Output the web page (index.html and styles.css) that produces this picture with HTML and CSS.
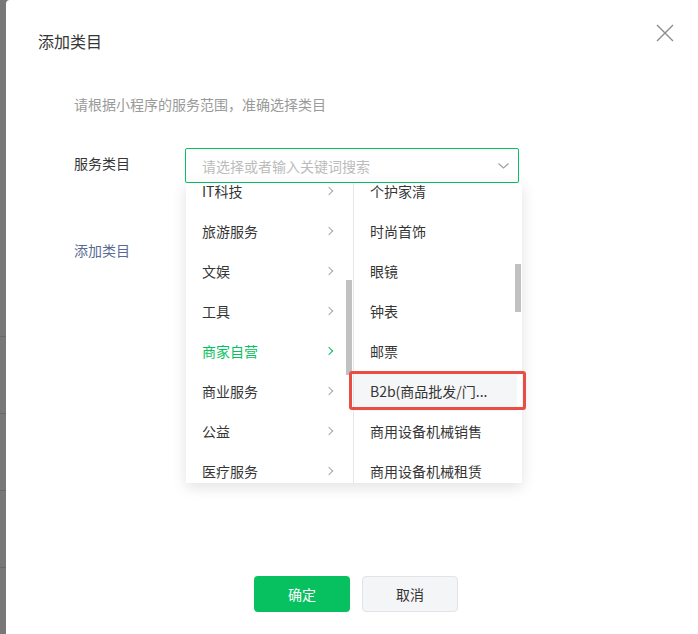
FILE: index.html
```html
<!DOCTYPE html>
<html lang="zh">
<head>
<meta charset="utf-8">
<link rel="stylesheet" href="styles.css">
</head>
<body>
<div class="modal">
  <div class="header">
    <h2 class="title">添加类目</h2>
    <button class="close" aria-label="关闭">
      <svg width="18" height="18" viewBox="0 0 18 18"><path d="M1 1L17 17M17 1L1 17" stroke="#8c8c8c" stroke-width="1.4" fill="none"/></svg>
    </button>
  </div>
  <div class="body">
    <p class="tip">请根据小程序的服务范围，准确选择类目</p>
    <div class="form-row">
      <label class="label">服务类目</label>
      <div class="select">
        <div class="input">
          <span class="placeholder">请选择或者输入关键词搜索</span>
          <svg class="arrow" width="11" height="6" viewBox="0 0 11 6"><path d="M0.5 0.5L5.5 5L10.5 0.5" stroke="#a0a0a0" stroke-width="1.1" fill="none"/></svg>
        </div>
        <div class="dropdown">
          <div class="col col-left">
            <ul class="list">
              <li class="item">IT科技<span class="chev"></span></li>
              <li class="item">旅游服务<span class="chev"></span></li>
              <li class="item">文娱<span class="chev"></span></li>
              <li class="item">工具<span class="chev"></span></li>
              <li class="item active">商家自营<span class="chev"></span></li>
              <li class="item">商业服务<span class="chev"></span></li>
              <li class="item">公益<span class="chev"></span></li>
              <li class="item">医疗服务<span class="chev"></span></li>
            </ul>
            <div class="thumb thumb-left"></div>
          </div>
          <div class="col col-right">
            <ul class="list">
              <li class="item">个护家清</li>
              <li class="item">时尚首饰</li>
              <li class="item">眼镜</li>
              <li class="item">钟表</li>
              <li class="item">邮票</li>
              <li class="item hover">B2b(商品批发/门...</li>
              <li class="item">商用设备机械销售</li>
              <li class="item">商用设备机械租赁</li>
            </ul>
            <div class="thumb thumb-right"></div>
          </div>
          <div class="mark"></div>
        </div>
      </div>
    </div>
    <a class="link" href="#">添加类目</a>
  </div>
  <div class="footer">
    <button class="btn btn-primary">确定</button>
    <button class="btn btn-default">取消</button>
  </div>
</div>
</body>
</html>
```

FILE: styles.css
```css
* { box-sizing: border-box; }
html, body { margin: 0; padding: 0; }
body {
  width: 698px;
  height: 634px;
  overflow: hidden;
  font-family: "Noto Sans CJK SC", "Noto Sans", "Liberation Sans", sans-serif;
  background-color: #787878;
  background-image:
    linear-gradient(#6a6a6a, #6a6a6a),
    linear-gradient(#6a6a6a, #6a6a6a),
    linear-gradient(#6a6a6a, #6a6a6a),
    linear-gradient(#6a6a6a, #6a6a6a);
  background-size: 6px 1px;
  background-repeat: no-repeat;
  background-position: 0 336px, 0 413px, 0 490px, 0 567px;
}
.modal {
  margin-left: 6px;
  width: 692px;
  height: 634px;
  background: #fff;
  border-top-left-radius: 4px;
  display: flex;
  flex-direction: column;
  position: relative;
}
.header {
  padding: 29px 0 0 32px;
  position: relative;
}
.title {
  margin: 0;
  font-size: 16px;
  font-weight: normal;
  line-height: 24px;
  color: #353535;
}
.close {
  position: absolute;
  top: 24px;
  right: 24px;
  width: 18px;
  height: 18px;
  padding: 0;
  border: 0;
  background: none;
  display: block;
}
.close svg { display: block; }
.body {
  padding-left: 68px;
}
.tip {
  margin: 41px 0 0;
  font-size: 14px;
  line-height: 20px;
  color: #9a9a9a;
}
.form-row {
  margin-top: 34px;
  display: flex;
  align-items: flex-start;
}
.label {
  width: 111px;
  font-size: 14px;
  line-height: 31px;
  color: #353535;
}
.select {
  position: relative;
  width: 334px;
}
.input {
  height: 35px;
  border: 1px solid #07c160;
  border-radius: 2px;
  display: flex;
  align-items: center;
  padding: 0 9px 0 16px;
}
.placeholder {
  flex: 1;
  font-size: 14px;
  color: #bcbcbc;
}
.arrow { display: block; margin-top: 1px; }
.dropdown {
  position: absolute;
  top: 35px;
  left: 1px;
  width: 336px;
  height: 300px;
  background: #fff;
  display: flex;
  box-shadow: 0 4px 14px rgba(0, 0, 0, 0.12);
  z-index: 2;
}
.col {
  position: relative;
  overflow: hidden;
  height: 100%;
}
.col-left {
  width: 168px;
  border-right: 1px solid #e6e6e6;
}
.col-right {
  width: 168px;
}
.list {
  list-style: none;
  margin: -12px 0 0;
  padding: 0;
}
.item {
  height: 40px;
  display: flex;
  align-items: center;
  font-size: 14px;
  color: #353535;
  white-space: nowrap;
}
.col-left .item { padding: 0 21px 0 16px; justify-content: space-between; }
.col-right .item { padding: 0 16px; margin-right: 5px; }
.item.active { color: #07c160; }
.item.hover { background: #f5f6f7; }
.chev {
  width: 6px;
  height: 6px;
  border-top: 1px solid #a8a8a8;
  border-right: 1px solid #a8a8a8;
  transform: rotate(45deg);
}
.item.active .chev { border-color: #07c160; }
.thumb {
  position: absolute;
  width: 6px;
  background: #c1c1c1;
}
.thumb-left { right: 1px; top: 97px; height: 95px; }
.thumb-right { right: 1px; top: 81px; height: 48px; }
.mark {
  position: absolute;
  left: 163px;
  top: 188px;
  width: 177px;
  height: 39px;
  border: 3px solid #ea4d43;
  border-radius: 3px;
  z-index: 3;
}
.link {
  display: block;
  margin-top: 57px;
  width: max-content;
  font-size: 14px;
  line-height: 20px;
  color: #576b95;
  text-decoration: none;
}
.footer {
  margin-top: auto;
  padding: 0 0 22px 8px;
  display: flex;
  justify-content: center;
  gap: 12px;
}
.btn {
  width: 96px;
  height: 36px;
  border-radius: 4px;
  font-family: inherit;
  font-size: 14px;
  padding: 0;
}
.btn-primary {
  background: #07c160;
  border: 0;
  color: #fff;
}
.btn-default {
  background: #f4f5f7;
  border: 1px solid #e2e3e6;
  color: #353535;
}
```
